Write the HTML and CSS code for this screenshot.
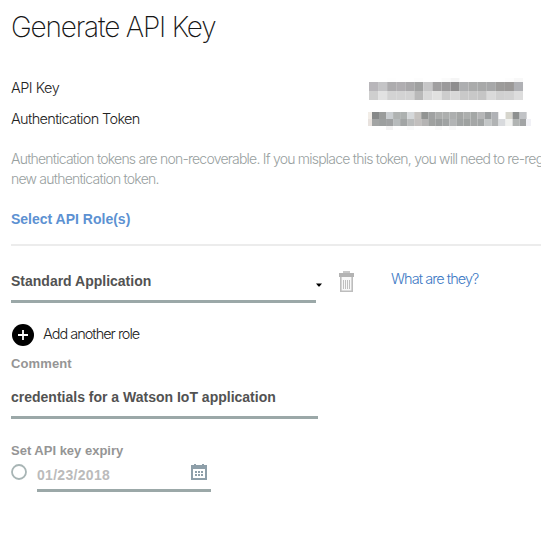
FILE: index.html
```
<!DOCTYPE html>
<html lang="en">
<head>
<meta charset="utf-8">
<title>Generate API Key</title>
<link rel="stylesheet" href="styles.css">
</head>
<body>
<main class="panel">
  <h1 class="title">Generate API Key</h1>
  <dl class="credentials">
    <div class="credential">
      <dt class="key-label">API Key</dt>
      <dd><svg class="mosaic" id="key-mosaic" width="164" height="31" aria-hidden="true"></svg></dd>
    </div>
    <div class="credential">
      <dt class="token-label">Authentication Token</dt>
      <dd><svg class="mosaic" id="token-mosaic" width="164" height="31" aria-hidden="true"></svg></dd>
    </div>
  </dl>
  <p class="notice"><span class="notice-first">Authentication tokens are non-recoverable. If you misplace this token, you will need to re-reg</span><br><span class="notice-second">new authentication token.</span></p>
  <h2 class="section-title">Select API Role(s)</h2>
  <div class="role-row">
    <div class="select"><span class="role-name">Standard Application</span>
      <svg class="caret" width="6" height="4" viewBox="0 0 6 4"><path d="M0 0.5h6L3.5 3.5h-1z"/></svg>
    </div>
    <svg class="trash" width="15" height="21" viewBox="0 0 15 21">
      <path fill="#c7c7c7" d="M4 0h7v2H4z"/><path fill="#b3b3b3" d="M0 2h15v4H0z"/>
      <path fill="#f8f8f8" stroke="#bdbdbd" stroke-width="1.6" d="M1.8 6v14.2h11.4V6"/>
      <path stroke="#c0c0c0" d="M4.5 9v9M6.5 9v9M8.5 9v9M10.5 9v9"/>
    </svg>
    <a class="help">What are they?</a>
  </div>
  <div class="add-role">
    <svg width="22" height="22" viewBox="0 0 22 22"><circle cx="11" cy="11" r="11"/><path stroke="#fff" stroke-width="1.8" d="M6 11h10M11 6v10"/></svg>
    <span class="add-label">Add another role</span>
  </div>
  <div class="label comment-label">Comment</div>
  <div class="comment"><span class="comment-text">credentials for a Watson IoT application</span></div>
  <div class="label expiry-label">Set API key expiry</div>
  <div class="expiry">
    <svg class="radio" width="16" height="16" viewBox="0 0 16 16"><circle cx="8" cy="8" r="7" fill="none" stroke="#a8b5b5" stroke-width="1.8"/></svg>
    <div class="date"><span class="date-text">01/23/2018</span>
      <svg class="calendar" width="16" height="16" viewBox="0 0 16 16" fill="#8e9fa9">
        <path fill-rule="evenodd" d="M0 1h3V0h2v1h6V0h2v1h3v15H0zM2 5v9h12V5z"/>
        <path d="M4 7h2v2H4zM7 7h2v2H7zM10 7h2v2h-2zM4 10h2v2H4zM7 10h2v2H7zM10 10h2v2h-2z"/>
      </svg>
    </div>
  </div>
</main>
<script src="mosaic.js"></script>
</body>
</html>
```
FILE: mosaic.js
```
// Each row: x, y, cell width, cell height, colours
function drawMosaic(id, rows) {
  const svg = document.getElementById(id);
  for (const [x, y, w, h, colours] of rows) {
    colours.split(' ').forEach((c, i) => {
      const cell = document.createElementNS('http://www.w3.org/2000/svg', 'rect');
      cell.setAttribute('x', x + i * w);
      cell.setAttribute('y', y);
      cell.setAttribute('width', w);
      cell.setAttribute('height', h);
      cell.setAttribute('fill', '#' + c);
      svg.appendChild(cell);
    });
  }
}
drawMosaic('key-mosaic', [
  [1, 6, 9.06, 4, 'fff fff fefefe fff fff fdfdfd fff fff fbfbfb f5f5f5 fff fff fff fff fff fdfdfd f8f8f8'],
  [1, 10, 9.06, 9, 'b8b6ba c4c4c6 adacae b0aeb1 a9a8aa a0a1a1 c6c6c7 a09fa0 9b9a9b 8e8d8e adaeb0 aaabab a8a9a9 a7a8a9 9d9c9b 9b9998 b0b1b5'],
  [1, 19, 9.06, 9, 'cfcfcf e2e2e2 d3d3d3 d3d3d3 d3d3d3 b9b9b9 d9d9d9 e1e1e0 cdcdcd d8d8d8 c9c9c9 c8c8c8 c5c5c5 dadada d0d0d0 d2d2d2 dddddd']
]);
drawMosaic('token-mosaic', [
  [0, 9, 4, 7, 'f2ede7'], [0, 16, 4, 7, 'e8e2de'],
  [4, 9, 7.03, 7, '878989 9a9c9b c9cdd0 b0b3b2 adb1b0 d5d8da c5c2bf 929493 a0a2a2 acaead adafae adafaf a5a7a6 adafae a4a7a6 b5b6b7 9b9e9f b0b2b6 fefeff d6d5cd 8d908f c1c3c6'],
  [4, 16, 7.03, 7, 'a2a4a4 9c9f9f 9fa1a2 b7bbbc a2a5a5 b9bbbb c2bfbe b5b4b4 9fa1a0 9a9d9d a0a3a3 b2b4b5 a1a4a4 9fa2a1 a5a7a7 a2a5a5 c3c6c7 b1b3b4 d8dadd f0f1ef b1b4b3 a2a4a5'],
  [158, 16, 5, 7, 'f1f1f6'],
  [18, 23, 7, 4, 'f3f3f3 fff fff fafafa'], [67, 23, 7, 4, 'fafafa fff f9f9f9']
]);
```
FILE: styles.css
```
* { box-sizing: border-box; }
body { margin: 0; background: #fff; color: #222; font: 300 14.5px/20px Inter, "Liberation Sans", sans-serif; overflow: hidden; }
.panel { width: 541px; height: 546px; padding: 10px 0 0 11px; overflow: hidden; }
svg { display: block; }
h1, h2, p, dl, dd { margin: 0; }
.title { height: 34px; font-size: 28px; line-height: 34px; font-weight: 200; letter-spacing: -1.18px; color: #161616; }
.credentials { padding-top: 28px; }
.credential { display: flex; height: 31px; width: 521px; justify-content: space-between; }
.credential dt { line-height: 31px; }
.key-label { letter-spacing: -0.5px; }
.token-label { letter-spacing: -0.66px; }
.notice { margin-top: 15px; height: 40px; color: #98a0a0; white-space: nowrap; font-size: 14px; letter-spacing: -0.77px; }
.notice-second { letter-spacing: -0.77px; }
.section-title { margin-top: 19px; height: 38px; border-bottom: 2px solid #ececec; color: #5c91d2; font: bold 14px/22px "Liberation Sans", sans-serif; }
.role-row { display: flex; height: 57px; padding-top: 24px; }
.select, .comment, .date { display: flex; justify-content: space-between; color: #525252; border-bottom: 3px solid #9ba8a8; font: bold 14px/22px "Liberation Sans", sans-serif; }
.select { width: 305px; height: 33px; }
.caret { margin: 13px -6px 0 0; }
.trash { margin: 1px 0 0 23px; }
.help { margin: -1px 0 0 37px; color: #3e7ac5; letter-spacing: -0.95px; }
.add-role { display: flex; align-items: center; height: 22px; margin-top: 21px; padding-left: 1px; gap: 9px; letter-spacing: -1px; }
.add-label { margin-top: -2px; }
.label { height: 20px; color: #959595; font: bold 13px/20px "Liberation Sans", sans-serif; }
.comment-label { margin-top: 8px; letter-spacing: 0.12px; }
.comment { width: 307px; height: 33px; margin-top: 12px; }
.expiry-label { margin-top: 22px; }
.expiry { display: flex; gap: 10px; height: 31px; }
.radio { margin-top: 3px; }
.date { width: 174px; height: 31px; color: #bbb; line-height: 28px; letter-spacing: 0.3px; }
.calendar { margin: 3px 4px 0 0; }
```
